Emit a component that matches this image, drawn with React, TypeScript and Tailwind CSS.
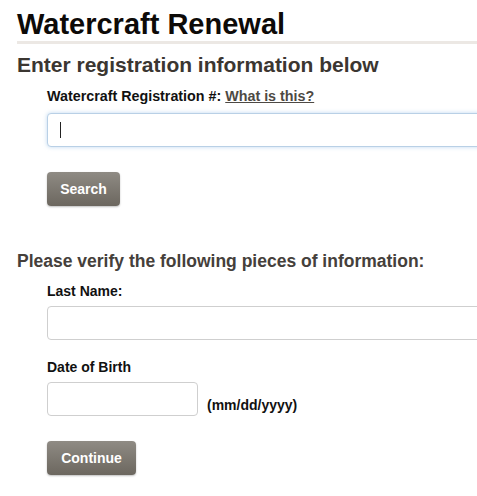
export default function App() {
  return (
    <div className="min-h-[496px] bg-white pl-[17px] pt-[8px] font-['Liberation_Sans',Arial,sans-serif] overflow-hidden">
      <h1 className="text-[29px] font-bold leading-[32px] text-[#0d0a08] border-b-[3px] border-[#ece8e4] pb-[1px]">
        Watercraft Renewal
      </h1>
      <h2 className="mt-[9px] text-[21px] font-bold leading-[24px] text-[#3b3631]">
        Enter registration information below
      </h2>

      <div className="pl-[30px] pt-[11px]">
        <label className="block text-[14.3px] font-bold leading-[16px] text-[#111]">
          Watercraft Registration #:{" "}
          <a href="#" className="text-[#4d4944] underline">
            What is this?
          </a>
        </label>
        <div className="mt-[9px] h-[34px] w-[460px] rounded-[4px] border border-[#b9d0e6] bg-white shadow-[0_0_4px_rgba(150,190,230,0.6)] flex items-center pl-[12px]">
          <span className="block h-[16px] w-px bg-[#222]" />
        </div>
        <button className="mt-[25px] h-[34px] w-[73px] rounded-[4px] bg-gradient-to-b from-[#8f8b84] to-[#6c675f] text-[14px] font-bold text-white shadow-[0_1px_2px_rgba(0,0,0,0.25)]">
          Search
        </button>
      </div>

      <h2 className="mt-[44px] text-[17.5px] font-bold leading-[22px] text-[#45403b]">
        Please verify the following pieces of information:
      </h2>

      <div className="pl-[30px] pt-[11px]">
        <label className="block text-[14px] font-bold leading-[16px] text-[#111]">Last Name:</label>
        <div className="mt-[7px] h-[34px] w-[460px] rounded-[4px] border border-[#cfcfcf] bg-white" />
        <label className="mt-[19px] block text-[14px] font-bold leading-[16px] text-[#111]">Date of Birth</label>
        <div className="mt-[7px] flex items-end gap-[9px]">
          <div className="h-[34px] w-[151px] rounded-[4px] border border-[#cfcfcf] bg-white" />
          <span className="pb-[3px] text-[14px] font-bold leading-[16px] text-[#111]">(mm/dd/yyyy)</span>
        </div>
        <button className="mt-[25px] h-[34px] w-[89px] rounded-[4px] bg-gradient-to-b from-[#8f8b84] to-[#6c675f] text-[14px] font-bold text-white shadow-[0_1px_2px_rgba(0,0,0,0.25)]">
          Continue
        </button>
      </div>
    </div>
  );
}
